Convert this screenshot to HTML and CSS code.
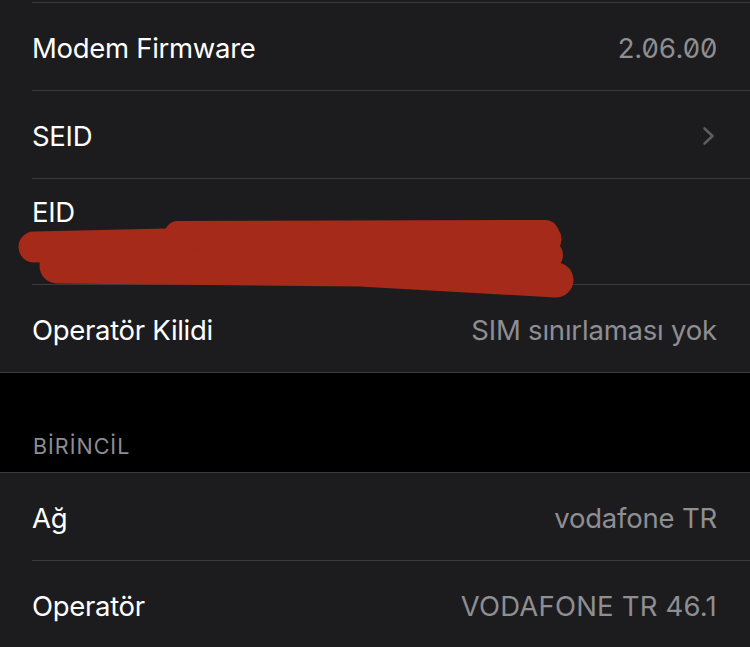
FILE: index.html
```html
<!DOCTYPE html>
<html lang="tr">
<head>
<meta charset="UTF-8" />
<meta name="viewport" content="width=device-width, initial-scale=1" />
<title>Hakkında</title>
<link rel="stylesheet" href="styles.css">
</head>
<body>

<div class="group group-top">
  <div class="row"><div class="cell cut"></div></div>
  <div class="row">
    <div class="cell">
      <span class="label">Modem Firmware</span>
      <span class="value mono">2.06.00</span>
    </div>
  </div>
  <div class="row">
    <div class="cell">
      <span class="label">SEID</span>
      <svg class="chevron" width="14" height="20" viewBox="0 0 14 20">
        <path d="M2.5 2.5 L10.5 10 L2.5 17.5" fill="none" stroke="#5c5c61" stroke-width="2.6" stroke-linecap="round" stroke-linejoin="round"/>
      </svg>
    </div>
  </div>
  <div class="row">
    <div class="cell cell-eid">
      <span class="label">EID</span>
      <!-- redaction scribble drawn over the EID value -->
      <svg class="scribble" width="600" height="120" viewBox="0 0 600 120">
        <g fill="none" stroke="#a52a1a" stroke-linecap="round" stroke-linejoin="round">
          <path d="M34 68 L300 62 L546 60" stroke-width="31"/>
          <path d="M178 56 L545 55" stroke-width="28"/>
          <path d="M300 76 L548 76" stroke-width="30"/>
          <path d="M57 87 L360 90 L556 101" stroke-width="35"/>
        </g>
      </svg>
    </div>
  </div>
  <div class="row">
    <div class="cell last">
      <span class="label">Operatör Kilidi</span>
      <span class="value">SIM sınırlaması yok</span>
    </div>
  </div>
</div>

<div class="section-header">BİRİNCİL</div>

<div class="group">
  <div class="row">
    <div class="cell">
      <span class="label">Ağ</span>
      <span class="value">vodafone TR</span>
    </div>
  </div>
  <div class="row">
    <div class="cell last">
      <span class="label">Operatör</span>
      <span class="value caps">VODAFONE TR 46.1</span>
    </div>
  </div>
</div>

</body>
</html>
```

FILE: styles.css
```css
body {
  margin: 0;
  background: #000;
  color: #fff;
  font-family: Inter, "Noto Sans", sans-serif;
  overflow: hidden;
}
.group {
  background: #1c1c1e;
  border-top: 1px solid #3a3a3d;
  border-bottom: 1px solid #3a3a3d;
}
.group-top {
  border-top: none;
}
.row {
  padding-left: 32px;
}
.cell {
  height: 88px;
  box-sizing: border-box;
  display: flex;
  align-items: center;
  justify-content: space-between;
  padding: 2px 33px 0 0;
  border-bottom: 1px solid #3a3a3d;
}
.cell.cut {
  height: 3px;
  padding: 0;
}
.cell.last {
  height: 87px;
  border-bottom: none;
}
.cell-eid {
  position: relative;
  height: 106px;
  align-items: flex-start;
  padding-top: 16px;
}
.label {
  font-size: 27.5px;
  line-height: 34px;
  letter-spacing: -0.3px;
}
.value {
  font-size: 27.5px;
  line-height: 34px;
  color: #8e8e93;
  letter-spacing: -0.2px;
}
.value.caps {
  letter-spacing: 0.2px;
}
.mono {
  font-variant-numeric: tabular-nums slashed-zero;
  letter-spacing: -0.6px;
}
.chevron {
  margin-right: 1px;
}
.scribble {
  position: absolute;
  left: -32px;
  top: 0;
}
.section-header {
  height: 99px;
  box-sizing: border-box;
  padding: 0 32px 12px 33px;
  display: flex;
  align-items: flex-end;
  font-size: 21.5px;
  line-height: 28px;
  color: #8d8d93;
  letter-spacing: 1px;
}
```
